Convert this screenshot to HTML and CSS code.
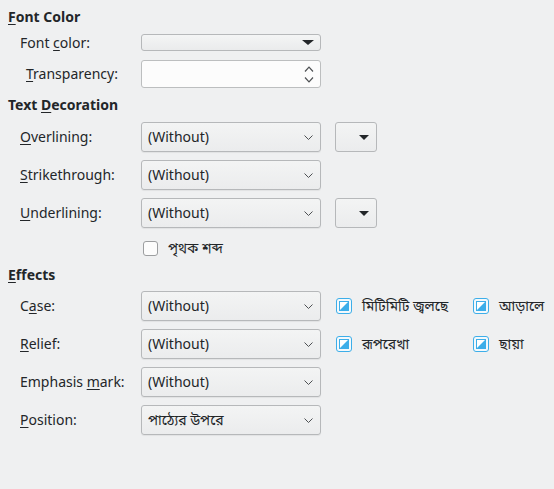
FILE: index.html
```html
<!DOCTYPE html>
<html>
<head>
<meta charset="utf-8">
<link rel="stylesheet" href="styles.css">
</head>
<body>
<div class="page">
  <div class="heading h1"><u>F</u>ont Color</div>
  <div class="row r-fontcolor">
    <div class="label">Font <u>c</u>olor:</div>
    <div class="colorbox"><span class="tri"></span></div>
  </div>
  <div class="row r-transp">
    <div class="label indent"><u>T</u>ransparency:</div>
    <div class="spin">
      <svg class="spinarrows" width="10" height="17" viewBox="0 0 10 17"><path d="M1 5.5 L5 1.2 L9 5.5 M1 11.5 L5 15.8 L9 11.5" fill="none" stroke="#4d5053" stroke-width="1.2"/></svg>
    </div>
  </div>

  <div class="heading h2">Text <u>D</u>ecoration</div>
  <div class="row r-combo first">
    <div class="label"><u>O</u>verlining:</div>
    <div class="combo"><span class="val">(Without)</span><svg class="chev" width="9" height="5" viewBox="0 0 9 5"><path d="M0.5 0.5 L4.5 4.5 L8.5 0.5" fill="none" stroke="#4d5053" stroke-width="1"/></svg></div>
    <div class="colorbtn"><span class="tri"></span></div>
  </div>
  <div class="row r-combo">
    <div class="label"><u>S</u>trikethrough:</div>
    <div class="combo"><span class="val">(Without)</span><svg class="chev" width="9" height="5" viewBox="0 0 9 5"><path d="M0.5 0.5 L4.5 4.5 L8.5 0.5" fill="none" stroke="#4d5053" stroke-width="1"/></svg></div>
  </div>
  <div class="row r-combo">
    <div class="label"><u>U</u>nderlining:</div>
    <div class="combo"><span class="val">(Without)</span><svg class="chev" width="9" height="5" viewBox="0 0 9 5"><path d="M0.5 0.5 L4.5 4.5 L8.5 0.5" fill="none" stroke="#4d5053" stroke-width="1"/></svg></div>
    <div class="colorbtn"><span class="tri"></span></div>
  </div>
  <div class="row r-check">
    <div class="label"></div>
    <span class="box"></span><span class="bn">পৃথক শব্দ</span>
  </div>

  <div class="heading h3"><u>E</u>ffects</div>
  <div class="row r-combo first2">
    <div class="label">C<u>a</u>se:</div>
    <div class="combo"><span class="val">(Without)</span><svg class="chev" width="9" height="5" viewBox="0 0 9 5"><path d="M0.5 0.5 L4.5 4.5 L8.5 0.5" fill="none" stroke="#4d5053" stroke-width="1"/></svg></div>
    <div class="tri-check c1"><svg width="16" height="16" viewBox="0 0 16 16"><rect x="0.5" y="0.5" width="15" height="15" rx="2.5" fill="#f4f9fc" stroke="#3daee9"/><rect x="3" y="3" width="10" height="10" fill="#3daee9"/><path d="M4 4 H12 L4 12 Z" fill="#ffffff"/></svg><span class="bn">মিটিমিটি জ্বলছে</span></div>
    <div class="tri-check c2"><svg width="16" height="16" viewBox="0 0 16 16"><rect x="0.5" y="0.5" width="15" height="15" rx="2.5" fill="#f4f9fc" stroke="#3daee9"/><rect x="3" y="3" width="10" height="10" fill="#3daee9"/><path d="M4 4 H12 L4 12 Z" fill="#ffffff"/></svg><span class="bn">আড়ালে</span></div>
  </div>
  <div class="row r-combo">
    <div class="label"><u>R</u>elief:</div>
    <div class="combo"><span class="val">(Without)</span><svg class="chev" width="9" height="5" viewBox="0 0 9 5"><path d="M0.5 0.5 L4.5 4.5 L8.5 0.5" fill="none" stroke="#4d5053" stroke-width="1"/></svg></div>
    <div class="tri-check c1"><svg width="16" height="16" viewBox="0 0 16 16"><rect x="0.5" y="0.5" width="15" height="15" rx="2.5" fill="#f4f9fc" stroke="#3daee9"/><rect x="3" y="3" width="10" height="10" fill="#3daee9"/><path d="M4 4 H12 L4 12 Z" fill="#ffffff"/></svg><span class="bn">রূপরেখা</span></div>
    <div class="tri-check c2"><svg width="16" height="16" viewBox="0 0 16 16"><rect x="0.5" y="0.5" width="15" height="15" rx="2.5" fill="#f4f9fc" stroke="#3daee9"/><rect x="3" y="3" width="10" height="10" fill="#3daee9"/><path d="M4 4 H12 L4 12 Z" fill="#ffffff"/></svg><span class="bn">ছায়া</span></div>
  </div>
  <div class="row r-combo">
    <div class="label">Emphasis <u>m</u>ark:</div>
    <div class="combo"><span class="val">(Without)</span><svg class="chev" width="9" height="5" viewBox="0 0 9 5"><path d="M0.5 0.5 L4.5 4.5 L8.5 0.5" fill="none" stroke="#4d5053" stroke-width="1"/></svg></div>
  </div>
  <div class="row r-combo">
    <div class="label"><u>P</u>osition:</div>
    <div class="combo"><span class="val bn">পাঠ্যের উপরে</span><svg class="chev" width="9" height="5" viewBox="0 0 9 5"><path d="M0.5 0.5 L4.5 4.5 L8.5 0.5" fill="none" stroke="#4d5053" stroke-width="1"/></svg></div>
  </div>
</div>
</body>
</html>
```

FILE: styles.css
```css
html, body {
  margin: 0;
  padding: 0;
  background: #eff0f1;
}
body {
  width: 554px;
  height: 489px;
  overflow: hidden;
  font-family: "Noto Sans", "Noto Sans Bengali", "Lohit Bengali", "FreeSans", sans-serif;
  font-size: 14px;
  color: #232629;
}
.page {
  display: flex;
  flex-direction: column;
  padding-top: 7px;
}
u {
  text-decoration: underline;
  text-underline-offset: 2px;
  text-decoration-thickness: 1px;
}
.heading {
  height: 20px;
  line-height: 20px;
  font-weight: bold;
  padding-left: 8px;
}
.h2 { margin-top: 7px; }
.h3 { margin-top: 5px; }
.row {
  display: flex;
  align-items: center;
  padding-left: 20px;
}
.label {
  width: 121px;
  flex: none;
  line-height: 20px;
}
.label.indent {
  padding-left: 6px;
  width: 115px;
}
.r-fontcolor { margin-top: 7px; height: 17px; }
.r-transp { margin-top: 9px; height: 28px; }
.r-combo { height: 30px; margin-top: 8px; }
.r-combo.first { margin-top: 7px; }
.r-combo.first2 { margin-top: 6px; }
.r-check { margin-top: 8px; height: 24px; }

.colorbox {
  box-sizing: border-box;
  width: 180px;
  height: 17px;
  border: 1px solid #b6b8ba;
  border-radius: 3px;
  background: linear-gradient(#f4f5f5, #eaebec);
  display: flex;
  align-items: center;
  justify-content: flex-end;
  padding-right: 6px;
}
.tri {
  width: 0;
  height: 0;
  border-left: 6px solid transparent;
  border-right: 6px solid transparent;
  border-top: 5px solid #232629;
}
.spin {
  box-sizing: border-box;
  width: 180px;
  height: 28px;
  border: 1px solid #bcbebf;
  border-radius: 3px;
  background: #fcfcfc;
  display: flex;
  align-items: center;
  justify-content: flex-end;
  padding-right: 6px;
}
.combo {
  box-sizing: border-box;
  width: 180px;
  height: 30px;
  border: 1px solid #b6b8ba;
  border-radius: 3px;
  background: linear-gradient(#f3f4f4, #ebeced);
  box-shadow: 0 1px 1px rgba(0,0,0,0.06);
  display: flex;
  align-items: center;
  justify-content: space-between;
  padding: 0 7px 0 6px;
}
.val { line-height: 20px; }
.colorbtn {
  box-sizing: border-box;
  width: 42px;
  height: 30px;
  margin-left: 14px;
  border: 1px solid #b6b8ba;
  border-radius: 3px;
  background: linear-gradient(#f3f4f4, #ebeced);
  display: flex;
  align-items: center;
  justify-content: flex-end;
  padding-right: 7px;
}
.colorbtn .tri {
  border-left-width: 5.5px;
  border-right-width: 5.5px;
}
.box {
  box-sizing: border-box;
  width: 15px;
  height: 15px;
  margin-left: 2px;
  border: 1px solid #9c9ea0;
  border-radius: 3px;
  background: #fcfcfc;
}
.r-check .bn { margin-left: 10px; }
.tri-check {
  display: flex;
  align-items: center;
}
.tri-check svg { flex: none; }
.tri-check .bn { margin-left: 10px; }
.c1 { margin-left: 15px; width: 137px; }
.c2 { }
```
